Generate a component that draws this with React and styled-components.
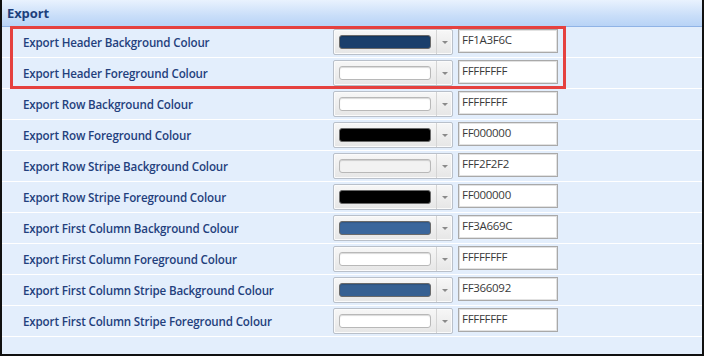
import React from "react";
import styled, { createGlobalStyle } from "styled-components";

const Global = createGlobalStyle`
  html, body { margin: 0; padding: 0; background: #ffffff; }
  * { box-sizing: border-box; }
`;

const Frame = styled.div`
  position: relative;
  width: 704px;
  height: 356px;
  background: #e3eefc;
  border-left: 2px solid #101010;
  border-right: 2px solid #101010;
  border-bottom: 2px solid #101010;
  font-family: "Open Sans", "Noto Sans", sans-serif;
  overflow: hidden;
`;

const Header = styled.div`
  height: 27px;
  display: flex;
  align-items: center;
  padding-left: 5px;
  background: linear-gradient(#e9f2fe, #c9def9 60%, #b8d3f6);
  border-bottom: 1px solid #8fb3e6;
  color: #1d3f7c;
  font-weight: 700;
  font-size: 13px;
  letter-spacing: -0.1px;
`;

const List = styled.div`
  display: flex;
  flex-direction: column;
`;

const Row = styled.div`
  height: 31px;
  display: grid;
  grid-template-columns: 326px 120px 100px;
  column-gap: 5px;
  align-items: start;
  border-bottom: 1px solid #ffffff;
`;

const Label = styled.div`
  height: 30px;
  display: flex;
  align-items: center;
  padding-left: 21px;
  color: #233f7c;
  font-weight: 600;
  font-size: 11.6px;
  letter-spacing: -0.15px;
  white-space: nowrap;
`;

const Combo = styled.div`
  margin-top: 2px;
  height: 26px;
  display: flex;
  align-items: center;
  border: 1px solid #b9c0ca;
  border-radius: 2px;
  background: linear-gradient(#f7f7f7, #e6e6e6);
  box-shadow: inset 0 0 0 1px #fbfbfb;
`;

const Swatch = styled.div`
  margin-left: 5px;
  width: 92px;
  height: 14px;
  border-radius: 3px;
  background: ${(p) => p.$color};
  border: 1px solid ${(p) => (p.$light ? "#b8b8b8" : "#6a6a6a")};
  box-shadow: inset 0 1px 1px rgba(0, 0, 0, 0.15);
`;

const DropPart = styled.div`
  margin-left: auto;
  width: 16px;
  height: 24px;
  border-left: 1px solid #d4d4d4;
  display: flex;
  align-items: center;
  justify-content: center;
`;

const Arrow = styled.div`
  width: 0;
  height: 0;
  border-left: 3px solid transparent;
  border-right: 3px solid transparent;
  border-top: 3px solid #8a8a8a;
`;

const ValueBox = styled.div`
  margin-top: 2px;
  height: 24px;
  background: #ffffff;
  border: 1px solid #a9a9a9;
  box-shadow: inset 0 0 0 1px #e2e2e2;
  padding: 2px 3px;
  font-family: "Open Sans", "Noto Sans", sans-serif;
  font-size: 11.5px;
  line-height: 16px;
  color: #3a3a3a;
  letter-spacing: -0.3px;
`;

const Highlight = styled.div`
  position: absolute;
  left: 8px;
  top: 26px;
  width: 556px;
  height: 63px;
  border: 3px solid #e5413f;
  pointer-events: none;
`;

const rows = [
  ["Export Header Background Colour", "#1a3f6c", "FF1A3F6C"],
  ["Export Header Foreground Colour", "#ffffff", "FFFFFFFF"],
  ["Export Row Background Colour", "#ffffff", "FFFFFFFF"],
  ["Export Row Foreground Colour", "#000000", "FF000000"],
  ["Export Row Stripe Background Colour", "#f2f2f2", "FFF2F2F2"],
  ["Export Row Stripe Foreground Colour", "#000000", "FF000000"],
  ["Export First Column Background Colour", "#3a669c", "FF3A669C"],
  ["Export First Column Foreground Colour", "#ffffff", "FFFFFFFF"],
  ["Export First Column Stripe Background Colour", "#366092", "FF366092"],
  ["Export First Column Stripe Foreground Colour", "#ffffff", "FFFFFFFF"],
];

const isLight = (c) => ["#ffffff", "#f2f2f2"].includes(c);

export default function App() {
  return (
    <>
      <Global />
      <Frame>
        <Header>Export</Header>
        <List>
          {rows.map(([label, color, hex]) => (
            <Row key={label}>
              <Label>{label}</Label>
              <Combo>
                <Swatch $color={color} $light={isLight(color)} />
                <DropPart>
                  <Arrow />
                </DropPart>
              </Combo>
              <ValueBox>{hex}</ValueBox>
            </Row>
          ))}
        </List>
        <Highlight />
      </Frame>
    </>
  );
}
